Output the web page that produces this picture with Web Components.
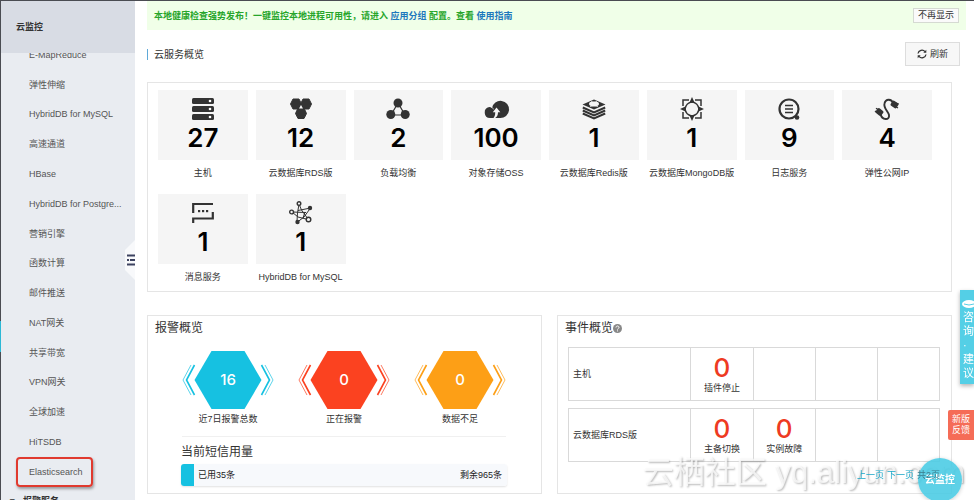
<!DOCTYPE html>
<html lang="zh-CN">
<head>
<meta charset="utf-8">
<title>云监控</title>
<style>
  * { box-sizing: border-box; }
  body {
    margin: 0;
    background: #fff;
    color: #333;
    font: 9px/14px "Liberation Sans", "Noto Sans CJK SC", sans-serif;
    overflow: hidden;
  }
</style>
</head>
<body>
<monitor-app>
  <side-nav slot="nav" heading="云监控"></side-nav>
  <notice-bar slot="main"></notice-bar>
  <section-head slot="main" heading="云服务概览"></section-head>
  <service-grid slot="main">
    <service-tile icon="host" count="27" label="主机"></service-tile>
    <service-tile icon="rds" count="12" label="云数据库RDS版"></service-tile>
    <service-tile icon="slb" count="2" label="负载均衡"></service-tile>
    <service-tile icon="oss" count="100" label="对象存储OSS"></service-tile>
    <service-tile icon="redis" count="1" label="云数据库Redis版"></service-tile>
    <service-tile icon="mongo" count="1" label="云数据库MongoDB版"></service-tile>
    <service-tile icon="log" count="9" label="日志服务"></service-tile>
    <service-tile icon="eip" count="4" label="弹性公网IP"></service-tile>
    <service-tile icon="mns" count="1" label="消息服务"></service-tile>
    <service-tile icon="hybrid" count="1" label="HybridDB for MySQL"></service-tile>
  </service-grid>
  <overview-card slot="cards" heading="报警概览">
    <alarm-summary>
      <alarm-hex color="#16c1e1" count="16" label="近7日报警总数"></alarm-hex>
      <alarm-hex color="#fb4220" count="0" label="正在报警"></alarm-hex>
      <alarm-hex color="#fd9f16" count="0" label="数据不足"></alarm-hex>
    </alarm-summary>
    <sms-usage used="35" left="965"></sms-usage>
  </overview-card>
  <overview-card slot="cards" heading="事件概览" help>
    <event-table name="主机" events="插件停止"></event-table>
    <event-table name="云数据库RDS版" events="主备切换,实例故障"></event-table>
    <page-links></page-links>
  </overview-card>
</monitor-app>
<float-tools></float-tools>
<water-mark>云栖社区 yq.aliyun.com</water-mark>

<script>
const ICONS = {
  host: `<g fill="#333"><rect x="1" y="1" width="22" height="6" rx="1.5"/><rect x="1" y="9" width="22" height="6" rx="1.5"/><rect x="1" y="17" width="22" height="6" rx="1.5"/></g>
    <g fill="#fff"><circle cx="19" cy="4" r="1.3"/><circle cx="19" cy="12" r="1.3"/><circle cx="19" cy="20" r="1.3"/></g>`,
  rds: `<g fill="#333" stroke="#333" stroke-width="1" stroke-linejoin="round"><path d="M4 2h6l2.500 5-2.500 5H4L1.500 7z"/><path d="M14 2h6l2.500 5-2.500 5h-6l-2.500-5z"/><path d="M9 11h6l2.500 5.500-2.500 5H9l-2.500-5z"/></g>
    <path d="M12 8l2 3.500h-4z" fill="#f5f5f5"/>`,
  slb: `<path d="M12 6L5 18h14z" fill="none" stroke="#333" stroke-width="1.2"/><g fill="#333"><circle cx="12" cy="6" r="4.500"/><circle cx="4.800" cy="17.500" r="4.500"/><circle cx="19.200" cy="17.500" r="4.500"/></g>`,
  oss: `<path fill="#333" d="M6 21a5.500 5.500 0 0 1-.8-10.900c1 0 2 .2 2.800.8a8.600 8.600 0 1 1 8 10.100z"/>
    <path fill="none" stroke="#f5f5f5" stroke-width=".8" d="M7.500 10.500c.8.300 1.600.8 2.200 1.600"/>
    <path fill="#f5f5f5" d="M12.500 10.500l3.800 4.800h-2.300c0 2.700-1 5-3.500 6.200H9c1.700-1.500 2.300-3.500 2.200-6.200H8.800z"/>`,
  redis: `<path fill="#333" d="M12 2.500l11.500 5L12 12.500.5 7.500z"/><ellipse cx="12" cy="7" rx="5" ry="2.400" fill="#f5f5f5"/><path d="M9 4.500l3 1 3-1M8 9.500l4-1 4 1" fill="none" stroke="#f5f5f5" stroke-width=".8"/>
    <path fill="none" stroke="#333" stroke-width="2" d="M.8 10.500L12 15.400l11.200-4.900M.8 13.500L12 18.400l11.200-4.900M.8 16.500L12 21.400l11.200-4.900"/>`,
  mongo: `<g fill="none" stroke="#333"><path d="M3 9V3h6M15 3h6v6M21 15v6h-6M9 21H3v-6" stroke-width="1.500"/><circle cx="12" cy="12" r="6.800" stroke-width="1.300"/></g>
    <g fill="#333"><path d="M12 0L15 6.500q-3-1.500-6 0z"/><path d="M12 24L15 17.500q-3 1.500-6 0z"/><path d="M0 12L6.500 9q-1.500 3 0 6z"/><path d="M24 12L17.500 9q1.500 3 0 6z"/></g>`,
  log: `<circle cx="12" cy="12" r="9.500" fill="none" stroke="#333" stroke-width="2.200"/><path d="M8 8.500h8M8 12h8M8 15.500h8" stroke="#333" stroke-width="1.500"/><circle cx="20" cy="20.500" r="2.300" fill="#333"/>`,
  eip: `<path d="M5.500 17c1.500 6.500 9.500 6.500 8.500 1-.6-3.300-5.800-7-4.500-11.500 1.200-5 7-5 8.500-.5" fill="none" stroke="#333" stroke-width="1.900"/>
    <g fill="#333"><rect x="-3.500" y="-3" width="7" height="6" rx="1.500" transform="translate(19.500 7.500) rotate(35)"/><path d="M21 6l2.800 1M20.500 9.500l2.500 1.500" stroke="#333" stroke-width="1.300"/><rect x="-3.500" y="-3" width="7" height="6" rx="1.500" transform="translate(4.500 15) rotate(40)"/><path d="M3 12.500L1 11.200M1.800 15.500L0 14" stroke="#333" stroke-width="1.300"/></g>`,
  mns: `<path d="M2.200 12V3H22M21.800 11v6.500H2.200V22" fill="none" stroke="#333" stroke-width="2.200"/><g fill="#333"><rect x="7" y="9" width="2.200" height="2.200"/><rect x="11" y="9" width="2.200" height="2.200"/><rect x="15" y="9" width="2.200" height="2.200"/></g>`,
  hybrid: `<path d="M10 3l2.500 6L19 18M10 3L8.500 12 8 20M3 11l14 .5M3 11l6 5 10 2.500M21.500 7L9 9.500M21.500 7L15 16 8.500 21M16 11l-2 6" fill="none" stroke="#333" stroke-width="1"/>
    <g fill="#f5f5f5" stroke="#333" stroke-width="1.400"><circle cx="10" cy="2.600" r="1.800"/><circle cx="2.600" cy="11" r="1.900"/><circle cx="19.500" cy="18.500" r="2.300"/></g><g fill="#333"><circle cx="21" cy="7" r="2.200"/><circle cx="8.500" cy="21" r="2.200"/></g>`
};

class BaseElement extends HTMLElement {
  connectedCallback() {
    if (this.shadowRoot) return;
    this.attachShadow({mode: 'open'});
    this.shadowRoot.innerHTML = '<style>*{box-sizing:border-box}</style>' + this.template();
  }
  attr(name) {
    return this.getAttribute(name) || '';
  }
}

class MonitorApp extends BaseElement {
  template() {
    return `
      <style>
        :host {
          display: grid;
          grid-template-columns: 135px minmax(0, 1fr);
          height: 100vh;
          border-top: 1px solid #4a4c52;
        }
        main { min-width: 0; padding-left: 12px; }
        .cards {
          display: grid;
          grid-template-columns: 1fr 1fr;
          gap: 15px;
          margin: 23px 22px 0 0;
        }
      </style>
      <slot name="nav"></slot>
      <main>
        <slot name="main"></slot>
        <div class="cards"><slot name="cards"></slot></div>
      </main>`;
  }
}

class SideNav extends BaseElement {
  template() {
    const items = ['E-MapReduce', '弹性伸缩', 'HybridDB for MySQL', '高速通道', 'HBase',
      'HybridDB for Postgre...', '营销引擎', '函数计算', '邮件推送', 'NAT网关', '共享带宽',
      'VPN网关', '全球加速', 'HiTSDB', 'Elasticsearch'];
    return `
      <style>
        :host {
          display: block;
          position: relative;
          overflow: hidden;
          padding-left: 1px;
          background: #e9ecf1;
        }
        h1 {
          position: relative;
          z-index: 1;
          margin: 0;
          height: 52px;
          padding-left: 15px;
          background: #d8dce4;
          font-size: 9px;
          line-height: 52px;
        }
        ul {
          display: flex;
          flex-direction: column;
          height: 447px;
          margin: -13px 0 0;
          padding: 0;
          list-style: none;
        }
        li {
          flex: 1;
          display: flex;
          align-items: center;
          padding-left: 28px;
        }
        a { color: #555; text-decoration: none; white-space: nowrap; }
        .marked {
          margin-left: -13px;
          padding: 6px 8px 6px 11px;
          border: 2px solid #e03a2f;
          border-radius: 4px;
          box-shadow: 1px 2px 3px rgba(0, 0, 0, .35);
        }
        .group {
          display: flex;
          gap: 8px;
          margin: 7px 0 0 9px;
          font-weight: bold;
        }
        .edge {
          position: absolute;
          left: 0;
          top: 0;
          bottom: 0;
          width: 1px;
          background: linear-gradient(#4a4c52 320px, #2cb8d6 320px, #2cb8d6 351px, #4a4c52 351px);
        }
        button {
          position: absolute;
          right: 0;
          top: 239px;
          width: 10px;
          height: 40px;
          padding: 0;
          border: 0;
          background: #f8f9fb;
          clip-path: polygon(100% 0, 0 25%, 0 75%, 100% 100%);
        }
        svg { display: block; margin-left: 2px; }
      </style>
      <h1>${this.attr('heading')}</h1>
      <ul>${items.map(name => `<li><a href="#"${name === 'Elasticsearch' ? ' class="marked"' : ''}>${name}</a></li>`).join('')}</ul>
      <div class="group"><span>▾</span><span>报警服务</span></div>
      <span class="edge"></span>
      <button aria-label="收起导航">
        <svg width="8" height="12" viewBox="0 0 8 12" stroke="#3c4260" stroke-width="2"><path d="M0 1.500h8M0 6h2M3 6h5M0 10.500h8"/></svg>
      </button>`;
  }
}

class NoticeBar extends BaseElement {
  template() {
    return `
      <style>
        :host {
          display: flex;
          justify-content: space-between;
          align-items: center;
          height: 29px;
          margin-right: 8px;
          padding: 0 7px;
          background: #f0ffe8;
          color: #27a52b;
        }
        p { margin: 0; font-weight: bold; }
        a { color: #1c78bd; text-decoration: none; }
        button {
          height: 15px;
          padding: 0 4px;
          border: 1px solid #d5dad2;
          background: #fafafa;
          color: #333;
          font: inherit;
          line-height: 13px;
        }
      </style>
      <p>本地健康检查强势发布！一键监控本地进程可用性，请进入 <a href="#">应用分组</a> 配置。查看 <a href="#">使用指南</a></p>
      <button>不再显示</button>`;
  }
}

class SectionHead extends BaseElement {
  template() {
    return `
      <style>
        :host {
          display: flex;
          justify-content: space-between;
          align-items: center;
          height: 24px;
          margin: 12px 14px 16px 0;
        }
        h2 {
          margin: 0;
          padding-left: 6px;
          border-left: 1px solid #5fa9d8;
          font-size: 10px;
          font-weight: 400;
          line-height: 11px;
        }
        button {
          display: flex;
          align-items: center;
          gap: 3px;
          height: 24px;
          padding: 0 11px;
          border: 1px solid #ddd;
          background: #f7f7f7;
          color: #333;
          font: inherit;
        }
      </style>
      <h2>${this.attr('heading')}</h2>
      <button>
        <svg width="10" height="10" viewBox="0 0 10 10" fill="none" stroke="#333" stroke-width="1.300"><path d="M1 4.500A4 4 0 0 1 8 2.600M9 5.500A4 4 0 0 1 2 7.400"/><path d="M9.300.8v3H6.300zM.7 9.200v-3h3z" fill="#333" stroke="none"/></svg>
        刷新
      </button>`;
  }
}

class ServiceGrid extends BaseElement {
  template() {
    return `
      <style>
        :host {
          display: grid;
          grid-template-columns: repeat(8, minmax(0, 1fr));
          gap: 14px 8px;
          margin-right: 22px;
          padding: 7px 19px 7px 10px;
          border: 1px solid #e5e5e5;
        }
      </style>
      <slot></slot>`;
  }
}

class ServiceTile extends BaseElement {
  template() {
    return `
      <style>
        :host { display: block; text-align: center; }
        .box { height: 70px; padding-top: 7px; background: #f5f5f5; }
        svg { display: block; margin: 0 auto; overflow: visible; }
        strong {
          display: block;
          color: #000;
          font: 600 26px/34px Inter, "Liberation Sans", sans-serif;
        }
        .label { margin-top: 6px; white-space: nowrap; }
      </style>
      <div class="box">
        <svg width="24" height="24" viewBox="0 0 24 24">${ICONS[this.attr('icon')]}</svg>
        <strong>${this.attr('count')}</strong>
      </div>
      <div class="label">${this.attr('label')}</div>`;
  }
}

class OverviewCard extends BaseElement {
  template() {
    const help = this.hasAttribute('help')
      ? '<svg width="9" height="9" viewBox="0 0 9 9"><circle cx="4.500" cy="4.500" r="4.500" fill="#888"/><path d="M3 3.500c0-2 3-2 3 0 0 1-1.500 1-1.500 2M4.500 6.400v1" fill="none" stroke="#fff"/></svg>'
      : '';
    return `
      <style>
        :host { display: block; height: 179px; border: 1px solid #e5e5e5; }
        h2 {
          display: flex;
          align-items: center;
          margin: 4px 0 0 7px;
          font-size: 12px;
          font-weight: 400;
          line-height: 16px;
        }
      </style>
      <h2>${this.attr('heading')}${help}</h2>
      <slot></slot>`;
  }
}

class AlarmSummary extends BaseElement {
  template() {
    return `
      <style>
        :host {
          display: flex;
          justify-content: space-between;
          margin: 14px 35px 0 34px;
          padding-bottom: 10px;
          border-bottom: 1px solid #f0f0f0;
        }
      </style>
      <slot></slot>`;
  }
}

class AlarmHex extends BaseElement {
  template() {
    return `
      <style>
        :host { display: block; width: 92px; text-align: center; color: ${this.attr('color')}; }
        .hex { display: grid; place-items: center; }
        .hex > * { grid-area: 1 / 1; }
        strong { color: #fff; font: 500 15px/20px Inter, "Liberation Sans", sans-serif; }
        .label { margin-top: 2px; color: #333; }
      </style>
      <div class="hex">
        <svg width="92" height="60" viewBox="0 0 92 60">
          <path d="M29.500 1h33L79.500 30 62.500 59h-33L12.500 30z" fill="currentColor"/>
          <g fill="none" stroke="currentColor">
            <path d="M12.500 15L4.500 30l8 15M79.500 15l8 15-8 15" stroke-width="1.600"/>
            <path d="M9 15L1 30l8 15M83 15l8 15-8 15" stroke-width=".7"/>
          </g>
        </svg>
        <strong>${this.attr('count')}</strong>
      </div>
      <div class="label">${this.attr('label')}</div>`;
  }
}

class SmsUsage extends BaseElement {
  template() {
    return `
      <style>
        :host { display: block; margin: 7px 34px 0 33px; }
        h3 { margin: 0 0 4px; font-size: 12px; font-weight: 400; line-height: 16px; }
        .bar {
          display: flex;
          justify-content: space-between;
          align-items: center;
          height: 22px;
          padding-right: 5px;
          overflow: hidden;
          border-radius: 3px;
          background: linear-gradient(to right, #16c1e1 4%, #f7f9fc 4%);
          box-shadow: 0 1px 2px rgba(0, 0, 0, .12);
          color: #222;
        }
        .used { padding-left: 17px; }
      </style>
      <h3>当前短信用量</h3>
      <div class="bar"><span class="used">已用${this.attr('used')}条</span><span>剩余${this.attr('left')}条</span></div>`;
  }
}

class EventTable extends BaseElement {
  template() {
    const events = this.attr('events').split(',');
    let cells = '';
    for (let i = 0; i < 4; i++) {
      cells += events[i] ? `<td><strong>0</strong>${events[i]}</td>` : '<td></td>';
    }
    return `
      <style>
        :host { display: block; margin: 11px 11px 0 10px; }
        :host(:nth-of-type(2)) { margin-top: 7px; }
        table { width: 100%; border-collapse: collapse; table-layout: fixed; }
        th, td { height: 53px; padding: 0; border: 1px solid #d9d9d9; }
        th { width: 33%; padding-left: 4px; font-weight: 400; text-align: left; }
        td { text-align: center; }
        strong {
          display: block;
          margin-top: 2px;
          color: #ee3a22;
          font: 500 26px/26px Inter, "Liberation Sans", sans-serif;
        }
      </style>
      <table><tr><th scope="row">${this.attr('name')}</th>${cells}</tr></table>`;
  }
}

class PageLinks extends BaseElement {
  template() {
    return `
      <style>
        :host {
          display: flex;
          justify-content: flex-end;
          gap: 3px;
          position: relative;
          z-index: 3;
          margin: 6px 11px 0;
          pointer-events: none;
        }
        a { color: #18a6c8; text-decoration: none; pointer-events: auto; }
        span { color: #3b7d8c; }
      </style>
      <a href="#">上一页</a><a href="#">下一页</a><span>共2页</span>`;
  }
}

class WaterMark extends BaseElement {
  template() {
    return `
      <style>
        :host {
          position: fixed;
          z-index: 1;
          right: 9px;
          bottom: 9px;
          color: rgba(255, 255, 255, .75);
          font-size: 31px;
          line-height: 36px;
          text-shadow: 1px 1px 2px rgba(0, 0, 0, .28);
          white-space: nowrap;
          pointer-events: none;
        }
      </style>
      <slot></slot>`;
  }
}

class FloatTools extends BaseElement {
  template() {
    return `
      <style>
        button {
          position: fixed;
          z-index: 2;
          right: 0;
          padding: 0;
          border: 0;
          color: #fff;
          font: inherit;
        }
        .advice {
          top: 290px;
          width: 14px;
          height: 94px;
          padding: 6px 0 0 3px;
          overflow: hidden;
          background: #54cfe6;
          box-shadow: 0 2px 4px rgba(0, 0, 0, .3);
          font-size: 11px;
          line-height: 14px;
          text-align: left;
        }
        .advice span { display: block; width: 11px; }
        .advice svg { display: block; margin: 0 0 2px -1px; }
        .feedback {
          top: 410px;
          width: 26px;
          height: 30px;
          border-radius: 2px 0 0 2px;
          background: #f56c57;
          line-height: 11px;
        }
        .monitor {
          right: 12px;
          bottom: -2px;
          width: 44px;
          height: 44px;
          border-radius: 50%;
          background: rgba(72, 203, 228, .88);
          box-shadow: 0 1px 4px rgba(0, 0, 0, .2);
          font-size: 10px;
          font-weight: bold;
        }
      </style>
      <button class="advice">
        <svg width="14" height="8" viewBox="0 0 14 8"><ellipse cx="7" cy="4" rx="7" ry="4" fill="#fff"/><path d="M2 4q5 2 10 0" fill="none" stroke="#54cfe6"/></svg>
        <span>咨</span><span>询</span><span>·</span><span>建</span><span>议</span>
      </button>
      <button class="feedback">新版<br>反馈</button>
      <button class="monitor">云监控</button>`;
  }
}

customElements.define('monitor-app', MonitorApp);
customElements.define('side-nav', SideNav);
customElements.define('notice-bar', NoticeBar);
customElements.define('section-head', SectionHead);
customElements.define('service-grid', ServiceGrid);
customElements.define('service-tile', ServiceTile);
customElements.define('overview-card', OverviewCard);
customElements.define('alarm-summary', AlarmSummary);
customElements.define('alarm-hex', AlarmHex);
customElements.define('sms-usage', SmsUsage);
customElements.define('event-table', EventTable);
customElements.define('page-links', PageLinks);
customElements.define('water-mark', WaterMark);
customElements.define('float-tools', FloatTools);
</script>
</body>
</html>
